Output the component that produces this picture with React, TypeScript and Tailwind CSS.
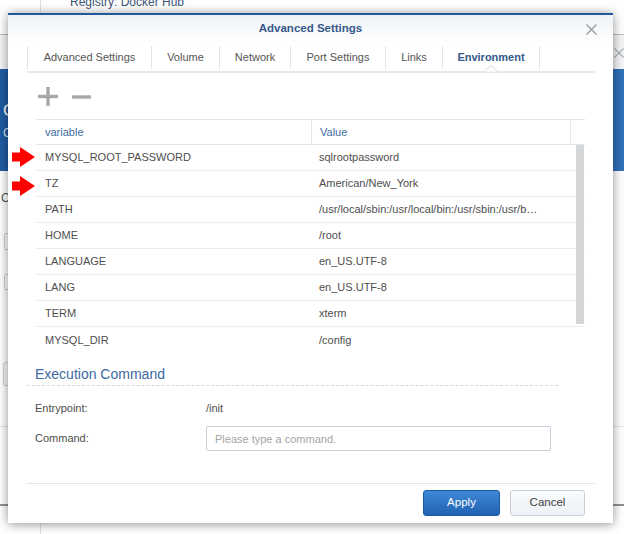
import React from 'react';

const tabs = [
  { label: 'Advanced Settings', width: 'w-[124px]' },
  { label: 'Volume', width: 'w-[68px]' },
  { label: 'Network', width: 'w-[71px]' },
  { label: 'Port Settings', width: 'w-[95px]' },
  { label: 'Links', width: 'w-[57px]' },
  { label: 'Environment', width: 'w-[98px]', active: true },
];

const envRows: [string, string][] = [
  ['MYSQL_ROOT_PASSWORD', 'sqlrootpassword'],
  ['TZ', 'American/New_York'],
  ['PATH', '/usr/local/sbin:/usr/local/bin:/usr/sbin:/usr/b…'],
  ['HOME', '/root'],
  ['LANGUAGE', 'en_US.UTF-8'],
  ['LANG', 'en_US.UTF-8'],
  ['TERM', 'xterm'],
  ['MYSQL_DIR', '/config'],
];

const CloseIcon = ({ size = 11, color = '#9a9a9a' }: { size?: number; color?: string }) => (
  <svg width={size} height={size} viewBox="0 0 11 11">
    <path d="M0.5 0.5 L10.5 10.5 M10.5 0.5 L0.5 10.5" stroke={color} strokeWidth="1.4" />
  </svg>
);

const RedArrow = ({ top }: { top: string }) => (
  <svg width="23" height="20" viewBox="0 0 23 20" className={`absolute left-[12px] ${top}`}>
    <polygon points="0,5.5 8,5.5 8,0 23,10 8,20 8,14.5 0,14.5" fill="#ff0000" />
  </svg>
);

// the wizard window that sits behind the dialog (only its edges show)
const BackWindow = () => (
  <div className="absolute left-0 right-0 top-[34px] h-[472px] border-t border-[#b9bec4] border-b-2 border-b-[#8d9196] bg-white flex flex-col">
    <div className="h-[34px] bg-[#f3f5f7] relative">
      <div className="absolute left-[614px] top-[13px]">
        <CloseIcon size={10} color="#b0b4b8" />
      </div>
    </div>
    <div className="h-[102px] bg-gradient-to-r from-[#1f5ca4] via-[#2463ad] to-[#2f70b8] pl-[3px] pt-[32px]">
      <div className="w-[5px] overflow-hidden flex flex-col gap-[4px]">
        <span className="text-white text-[17px] leading-[20px]">C</span>
        <span className="text-[#dce7f4] text-[12px] leading-[16px]">C</span>
      </div>
    </div>
    <div className="flex-1 relative pl-[1px]">
      <div className="w-[7px] overflow-hidden text-[#555] text-[12px] mt-[18px]">C</div>
      <div className="ml-[3px] mt-[26px] w-[120px] h-[17px] border border-[#c9ced4] rounded-[2px]" />
      <div className="ml-[3px] mt-[24px] w-[120px] h-[16px] border border-[#c9ced4] rounded-[2px]" />
      <div className="ml-[2px] mt-[72px] w-[90px] h-[24px] border border-[#c9ced4] rounded-[3px] bg-[#f6f8fa]" />
      <div className="absolute left-0 right-0 top-[255px] border-t border-[#e3e6e9]" />
    </div>
  </div>
);

export default function App() {
  return (
    <div className="relative w-[624px] h-[534px] overflow-hidden bg-white font-['Liberation_Sans',Arial,sans-serif] text-[11px]">
      {/* desktop behind */}
      <div className="absolute left-[40px] top-0 h-full border-l border-[#dcdfe2]" />
      <div className="absolute left-[70px] top-[-7px] text-[12px] text-[#3c5577]">Registry: Docker Hub</div>
      <BackWindow />

      {/* dialog */}
      <div className="absolute left-[8px] top-[13px] w-[605px] h-[510px] bg-white flex flex-col shadow-[0_1px_10px_rgba(0,0,0,0.45)]">
        <div className="h-[2px] bg-[#215a9b]" />
        <div className="h-[28px] relative flex items-center justify-center bg-gradient-to-b from-[#eef2f6] to-white">
          <span className="text-[11.5px] font-bold text-[#36598a]">Advanced Settings</span>
          <div className="absolute right-[16px] top-[9px]">
            <CloseIcon />
          </div>
        </div>

        {/* tabs */}
        <div className="ml-[19px] mr-[18px] h-[30px] flex items-center border-b-2 border-[#e6e9ec] relative">
          {tabs.map((t, i) => (
            <div
              key={t.label}
              className={`${t.width} h-[23px] flex items-center justify-center border-l border-[#e1e5e9] ${
                i === tabs.length - 1 ? 'border-r' : ''
              } ${t.active ? 'font-bold text-[#33598c]' : 'text-[#555]'}`}
            >
              {t.label}
            </div>
          ))}
          <svg width="14" height="7" viewBox="0 0 14 7" className="absolute left-[457px] bottom-[-1px]">
            <polyline points="0,6.5 7,0.5 14,6.5" fill="white" stroke="#d6dbe0" strokeWidth="1" />
          </svg>
        </div>

        {/* add / remove */}
        <div className="ml-[30px] mt-[14px] h-[19px] flex items-center gap-[14px]">
          <svg width="20" height="19" viewBox="0 0 20 19">
            <rect x="0" y="7.8" width="20" height="3.4" fill="#a8a8a8" />
            <rect x="8.3" y="0" width="3.4" height="19" fill="#a8a8a8" />
          </svg>
          <svg width="19" height="4" viewBox="0 0 19 4">
            <rect x="0" y="0.3" width="19" height="3.4" fill="#a8a8a8" />
          </svg>
        </div>

        {/* environment table */}
        <div className="mx-[28px] mt-[13px]">
          <div className="h-[26px] flex border-y border-[#dfe5eb] text-[#3f6ca3]">
            <div className="w-[275px] pl-[9px] flex items-center">variable</div>
            <div className="w-[259px] pl-[8px] flex items-center border-l border-[#e2e7ec]">Value</div>
            <div className="flex-1 border-l border-[#e2e7ec]" />
          </div>
          <div className="relative">
            {envRows.map(([name, value], i) => (
              <div
                key={name}
                className={`h-[26px] flex text-[#4e4e4e] ${i < envRows.length - 1 ? 'border-b border-[#eaeef2]' : ''}`}
              >
                <div className="w-[275px] pl-[9px] flex items-center">{name}</div>
                <div className="flex-1 pl-[8px] flex items-center whitespace-nowrap">{value}</div>
              </div>
            ))}
            <div className="absolute right-[1px] top-0 w-[8px] h-[179px] bg-[#d5d6d7]" />
          </div>
        </div>

        {/* execution command */}
        <div className="ml-[19px] w-[531px] mt-[10px] h-[23px] pl-[8px] flex items-center border-b border-dashed border-[#d3d8de]">
          <span className="text-[14px] text-[#3d6aa3]">Execution Command</span>
        </div>
        <div className="ml-[27px] mt-[11px] h-[22px] flex items-center text-[#4e4e4e]">
          <span className="w-[171px]">Entrypoint:</span>
          <span>/init</span>
        </div>
        <div className="ml-[27px] mt-[7px] h-[25px] flex items-center text-[#4e4e4e]">
          <span className="w-[171px]">Command:</span>
          <input
            className="w-[345px] h-[25px] border border-[#c8d1db] rounded-[2px] pl-[8px] outline-none text-[11px] placeholder:text-[#a5a5a5]"
            placeholder="Please type a command."
          />
        </div>

        <div className="flex-1" />

        {/* footer */}
        <div className="ml-[19px] mr-[18px] border-t border-[#e3e6e9] pt-[6px] pb-[7px] pr-[10px] flex justify-end gap-[10px]">
          <button className="w-[77px] h-[26px] rounded-[3px] border border-[#1d5aa6] bg-gradient-to-b from-[#3f89d8] to-[#2062b3] text-white text-[11.5px]">
            Apply
          </button>
          <button className="w-[75px] h-[26px] rounded-[3px] border border-[#c7d0d9] bg-gradient-to-b from-[#f9fbfc] to-[#edf1f5] text-[#3e3e3e] text-[11.5px]">
            Cancel
          </button>
        </div>
      </div>

      <RedArrow top="top-[147px]" />
      <RedArrow top="top-[176px]" />
    </div>
  );
}
